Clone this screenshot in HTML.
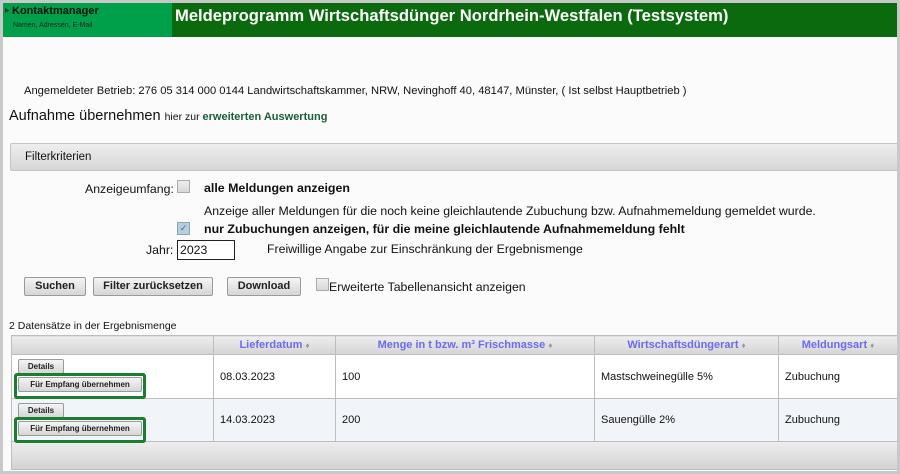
<!DOCTYPE html>
<html><head><meta charset="utf-8"><style>
*{box-sizing:border-box;margin:0;padding:0}
body{width:900px;height:474px;overflow:hidden;background:#fbfbfb;font-family:"Liberation Sans",Arial,sans-serif;position:relative;color:#111}
.frame{position:absolute;left:0;top:0;width:900px;height:474px;border:3px solid #c8c8c8;pointer-events:none}
.a{position:absolute;white-space:nowrap}
.btn{position:absolute;height:18px;border:1px solid #9a9a9a;background:linear-gradient(#f4f4f4,#d6d6d6);font-weight:bold;font-size:11px;text-align:center;line-height:16px;border-radius:2px;color:#222}
.cb{position:absolute;width:13px;height:13px;border:1px solid #aaa;background:linear-gradient(#eee,#d8d8d8)}
table{position:absolute;left:11px;top:335px;border-collapse:collapse;font-size:11px}
td,th{border:1px solid #bdbdbd;padding:0 6px}
th{height:19px;background:linear-gradient(#eee,#d4d4d4);color:#6b6bf0;font-weight:bold;text-align:center;font-size:11px}
th span{color:#999;font-size:8px}
.gb{position:absolute;left:14px;width:132px;height:26px;border:3px solid #1a7d30;border-radius:3px}
.sb{position:absolute;left:18px;font-size:8px;height:15px;line-height:13px;padding:0 4px}
</style></head><body>
<div class="a" style="left:3px;top:3px;width:169px;height:34px;background:#00a04a"></div>
<div class="a" style="left:172px;top:3px;width:725px;height:34px;background:#0b6a0e"></div>
<div class="a" style="left:5px;top:7px;font-size:6px;color:#333">&#9654;</div>
<div class="a" style="left:12px;top:5px;font-size:11px;font-weight:bold;color:#111">Kontaktmanager</div>
<div class="a" style="left:13px;top:22px;font-size:7px;color:#222">Namen, Adressen, E-Mail</div>
<div class="a" style="left:175px;top:6px;font-size:16.6px;font-weight:bold;color:#fff">Meldeprogramm Wirtschaftsdünger Nordrhein-Westfalen (Testsystem)</div>
<div class="a" style="left:24px;top:85px;font-size:11.2px">Angemeldeter Betrieb: 276 05 314 000 0144 Landwirtschaftskammer, NRW, Nevinghoff 40, 48147, Münster, ( Ist selbst Hauptbetrieb )</div>
<div class="a" style="left:9px;top:108px;font-size:14.5px">Aufnahme übernehmen <span style="font-size:10.5px">hier zur </span><span style="font-size:11px;color:#1b5e3a;font-weight:bold">erweiterten Auswertung</span></div>
<div class="a" style="left:10px;top:143px;width:890px;height:28px;background:linear-gradient(#eee,#d6d6d6);border:1px solid #c4c4c4;border-radius:2px;font-size:11.5px;line-height:27px;padding-left:14px">Filterkriterien</div>
<div class="a" style="left:85px;top:182px;font-size:12.3px">Anzeigeumfang:</div>
<div class="cb" style="left:177px;top:180px"></div>
<div class="a" style="left:204px;top:181px;font-size:12.4px;font-weight:bold">alle Meldungen anzeigen</div>
<div class="a" style="left:204px;top:204px;font-size:12.3px">Anzeige aller Meldungen für die noch keine gleichlautende Zubuchung bzw. Aufnahmemeldung gemeldet wurde.</div>
<div class="cb" style="left:177px;top:222px;background:#b7cde0;border-color:#8aa;font-size:9px;color:#468;line-height:11px;text-align:center">✓</div>
<div class="a" style="left:204px;top:222px;font-size:12.4px;font-weight:bold">nur Zubuchungen anzeigen, für die meine gleichlautende Aufnahmemeldung fehlt</div>
<div class="a" style="left:146px;top:243px;font-size:12.3px">Jahr:</div>
<div class="a" style="left:177px;top:240px;width:58px;height:20px;border:1px solid #222;background:#fff;font-size:12.3px;padding:2px 2px">2023</div>
<div class="a" style="left:267px;top:242px;font-size:12.3px">Freiwillige Angabe zur Einschränkung der Ergebnismenge</div>
<div class="btn" style="left:24px;top:277px;width:62px;height:19px">Suchen</div>
<div class="btn" style="left:93px;top:277px;width:120px;height:19px">Filter zurücksetzen</div>
<div class="btn" style="left:227px;top:277px;width:74px;height:19px">Download</div>
<div class="cb" style="left:316px;top:278px"></div>
<div class="a" style="left:329px;top:280px;font-size:12.3px">Erweiterte Tabellenansicht anzeigen</div>
<div class="a" style="left:9px;top:320px;font-size:10.5px">2 Datensätze in der Ergebnismenge</div>
<table>
<tr><th style="width:202px"></th><th style="width:122px">Lieferdatum <span>&#9830;</span></th><th style="width:259px">Menge in t bzw. m³ Frischmasse <span>&#9830;</span></th><th style="width:184px">Wirtschaftsdüngerart <span>&#9830;</span></th><th style="width:119px">Meldungsart <span>&#9830;</span></th></tr>
<tr style="height:44px;background:#fff"><td></td><td>08.03.2023</td><td>100</td><td>Mastschweinegülle 5%</td><td>Zubuchung</td></tr>
<tr style="height:43px;background:#f1f4f8"><td></td><td>14.03.2023</td><td>200</td><td>Sauengülle 2%</td><td>Zubuchung</td></tr>
<tr style="height:28px;background:linear-gradient(#eee,#d2d2d2)"><td colspan="5"></td></tr>
</table>
<div class="btn sb" style="top:359px;width:46px">Details</div>
<div class="gb" style="top:373px"></div>
<div class="btn sb" style="top:377px;width:124px">Für Empfang übernehmen</div>
<div class="btn sb" style="top:403px;width:46px">Details</div>
<div class="gb" style="top:417px"></div>
<div class="btn sb" style="top:421px;width:124px">Für Empfang übernehmen</div>
<div class="frame"></div>
</body></html>
